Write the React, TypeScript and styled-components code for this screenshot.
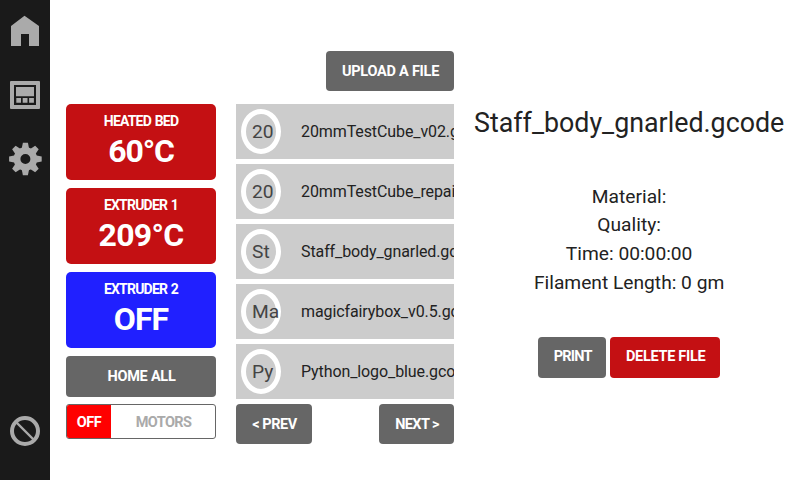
import React from "react";
import styled, { createGlobalStyle } from "styled-components";

const GlobalStyle = createGlobalStyle`
  *, *::before, *::after { box-sizing: border-box; }
  body {
    margin: 0;
    background: #fff;
    color: #222;
    font-family: Roboto, "Liberation Sans", sans-serif;
    font-size: 16px;
    overflow: hidden;
  }
  button { margin: 0; border: 0; cursor: pointer; }
`;

const Page = styled.div`
  display: flex;
  width: 800px;
  height: 480px;
  overflow: hidden;
`;

const Sidebar = styled.nav`
  flex: none;
  display: flex;
  flex-direction: column;
  align-items: center;
  width: 50px;
  height: 480px;
  padding-top: 11px;
  padding-bottom: 29px;
  gap: 24px;
  background: #1a1a1a;
`;

const NavItem = styled.a<{ $last?: boolean }>`
  display: block;
  width: 40px;
  height: 40px;
  margin-top: ${(p) => (p.$last ? "auto" : "0")};
  svg { display: block; }
`;

const Controls = styled.section`
  flex: none;
  display: flex;
  flex-direction: column;
  width: 150px;
  margin: 104px 20px 0 16px;
`;

const HeaterCard = styled.button<{ $active: boolean }>`
  display: flex;
  flex-direction: column;
  align-items: center;
  height: 76px;
  margin-bottom: 8px;
  padding: 9px 0 0;
  border-radius: 5px;
  background: ${(p) => (p.$active ? "#c41013" : "#2020ff")};
  color: #fff;
  font-family: inherit;
  font-weight: 700;
`;

const HeaterName = styled.span`
  font-size: 14px;
  line-height: 16px;
  letter-spacing: -0.8px;
  word-spacing: 1px;
`;

const HeaterValue = styled.span<{ $spacing: number }>`
  margin-top: 4px;
  font-size: 32px;
  line-height: 36px;
  letter-spacing: ${(p) => p.$spacing}px;
`;

const Button = styled.button<{ $width: number; $height?: number; $danger?: boolean; $spacing?: number }>`
  flex: none;
  display: flex;
  align-items: center;
  justify-content: center;
  width: ${(p) => p.$width}px;
  height: ${(p) => p.$height ?? 40}px;
  padding: ${(p) => (p.$height ? 0 : 2)}px 0 0 1px;
  border-radius: 4px;
  background: ${(p) => (p.$danger ? "#c41013" : "#666")};
  color: #fff;
  font: 700 14.5px/20px Roboto, "Liberation Sans", sans-serif;
  letter-spacing: ${(p) => p.$spacing ?? -0.3}px;
  white-space: nowrap;
`;

const MotorSwitch = styled.div`
  display: flex;
  height: 35px;
  margin-top: 7px;
  border: 1px solid #666;
  border-radius: 3px;
  overflow: hidden;
  font-weight: 700;
  font-size: 14.5px;
  line-height: 35px;
  text-align: center;
`;

const MotorState = styled.span`
  width: 44px;
  background: #f00;
  color: #fff;
  letter-spacing: -0.4px;
`;

const MotorLabel = styled.span`
  flex: 1;
  padding-left: 1px;
  color: #aaa;
  letter-spacing: -0.6px;
`;

const Files = styled.section`
  flex: none;
  display: flex;
  flex-direction: column;
  width: 218px;
  padding-top: 51px;
`;

const UploadBar = styled.div`
  display: flex;
  justify-content: flex-end;
  margin-bottom: 13px;
`;

const FileList = styled.ul`
  display: flex;
  flex-direction: column;
  gap: 5px;
  margin: 0;
  padding: 0;
  list-style: none;
`;

const FileRow = styled.li`
  display: flex;
  align-items: center;
  height: 55px;
  padding-left: 5px;
  background: #ccc;
  overflow: hidden;
`;

const FileBadge = styled.span`
  flex: none;
  width: 40px;
  height: 45px;
  padding-left: 6px;
  border: 5px solid #fff;
  border-radius: 50%;
  color: #444;
  font-size: 19.2px;
  line-height: 35px;
  white-space: nowrap;
`;

const FileName = styled.span`
  margin-left: 20px;
  letter-spacing: -0.1px;
  white-space: nowrap;
`;

const Pager = styled.div`
  display: flex;
  justify-content: space-between;
  margin-top: 5px;
`;

const Details = styled.section`
  flex: 1;
  display: flex;
  flex-direction: column;
  align-items: center;
  margin-left: 20px;
  margin-right: 18px;
`;

const Title = styled.h1`
  margin: 104px 0 0;
  font-size: 26.8px;
  font-weight: 400;
  line-height: 38px;
  white-space: nowrap;
`;

const Facts = styled.div`
  display: flex;
  flex-direction: column;
  align-items: center;
  margin-top: 40.5px;
  font-size: 19.2px;
  line-height: 28.8px;
`;

const Actions = styled.div`
  display: flex;
  gap: 4px;
  margin-top: 39px;
`;

const iconProps = { width: 40, height: 40, fill: "#aaa" };

const HomeIcon = () => (
  <svg {...iconProps} viewBox="0 0 40 40">
    <path d="M6 15 19.5 4.8 34 15V35H24V23H16V35H6Z" />
  </svg>
);

const PanelIcon = () => (
  <svg {...iconProps} viewBox="0 0 40 40">
    <rect x="5" y="6" width="30" height="28" rx="1" />
    <rect x="9" y="10" width="22" height="20" fill="#1a1a1a" />
    <path d="M11 12h18v9.3H11zM11.3 23h4.7v4.8h-4.7zM17.7 23h4.8v4.8h-4.8zM24.1 23h4.8v4.8h-4.8z" />
  </svg>
);

const GearIcon = () => (
  <svg {...iconProps} viewBox="0 0 40 40">
    <g transform="translate(20.4 20)">
      {[0, 45, 90, 135, 180, 225, 270, 315].map((a) => (
        <path key={a} d="M-3.8-10-2.5-16.3H2.5L3.8-10Z" transform={`rotate(${a})`} />
      ))}
      <circle r="8.4" fill="none" stroke="#aaa" strokeWidth="6.8" />
    </g>
  </svg>
);

const StopIcon = () => (
  <svg {...iconProps} viewBox="0 0 40 40">
    <circle cx="20" cy="20" r="13" fill="none" stroke="#aaa" strokeWidth="4" />
    <path d="M11.5 11.5 28.5 28.5" stroke="#aaa" strokeWidth="2.4" />
  </svg>
);

const heaters = [
  { name: "HEATED BED", value: "60°C", active: true, spacing: -1.1 },
  { name: "EXTRUDER 1", value: "209°C", active: true, spacing: -0.7 },
  { name: "EXTRUDER 2", value: "OFF", active: false, spacing: -0.9 },
];

const files = [
  "20mmTestCube_v02.gcode",
  "20mmTestCube_repaired.gcode",
  "Staff_body_gnarled.gcode",
  "magicfairybox_v0.5.gcode",
  "Python_logo_blue.gcode",
];

const badgeText = (name: string) => name.charAt(0).toUpperCase() + name.charAt(1);

export default function App() {
  return (
    <Page>
      <GlobalStyle />
      <Sidebar>
        <NavItem><HomeIcon /></NavItem>
        <NavItem><PanelIcon /></NavItem>
        <NavItem><GearIcon /></NavItem>
        <NavItem $last><StopIcon /></NavItem>
      </Sidebar>
      <Controls>
        {heaters.map((h) => (
          <HeaterCard key={h.name} $active={h.active}>
            <HeaterName>{h.name}</HeaterName>
            <HeaterValue $spacing={h.spacing}>{h.value}</HeaterValue>
          </HeaterCard>
        ))}
        <Button $width={150} $height={41} $spacing={-0.25}>HOME ALL</Button>
        <MotorSwitch>
          <MotorState>OFF</MotorState>
          <MotorLabel>MOTORS</MotorLabel>
        </MotorSwitch>
      </Controls>
      <Files>
        <UploadBar>
          <Button $width={128} $spacing={-0.25}>UPLOAD A FILE</Button>
        </UploadBar>
        <FileList>
          {files.map((f) => (
            <FileRow key={f}>
              <FileBadge>{badgeText(f)}</FileBadge>
              <FileName>{f}</FileName>
            </FileRow>
          ))}
        </FileList>
        <Pager>
          <Button $width={76} $spacing={-0.5}>&lt; PREV</Button>
          <Button $width={75} $spacing={-0.6}>NEXT &gt;</Button>
        </Pager>
      </Files>
      <Details>
        <Title>Staff_body_gnarled.gcode</Title>
        <Facts>
          <span>Material:</span>
          <span>Quality:</span>
          <span>Time: 00:00:00</span>
          <span>Filament Length: 0 gm</span>
        </Facts>
        <Actions>
          <Button $width={68} $height={41} $spacing={-0.8}>PRINT</Button>
          <Button $width={110} $height={41} $danger $spacing={-0.3}>DELETE FILE</Button>
        </Actions>
      </Details>
    </Page>
  );
}
